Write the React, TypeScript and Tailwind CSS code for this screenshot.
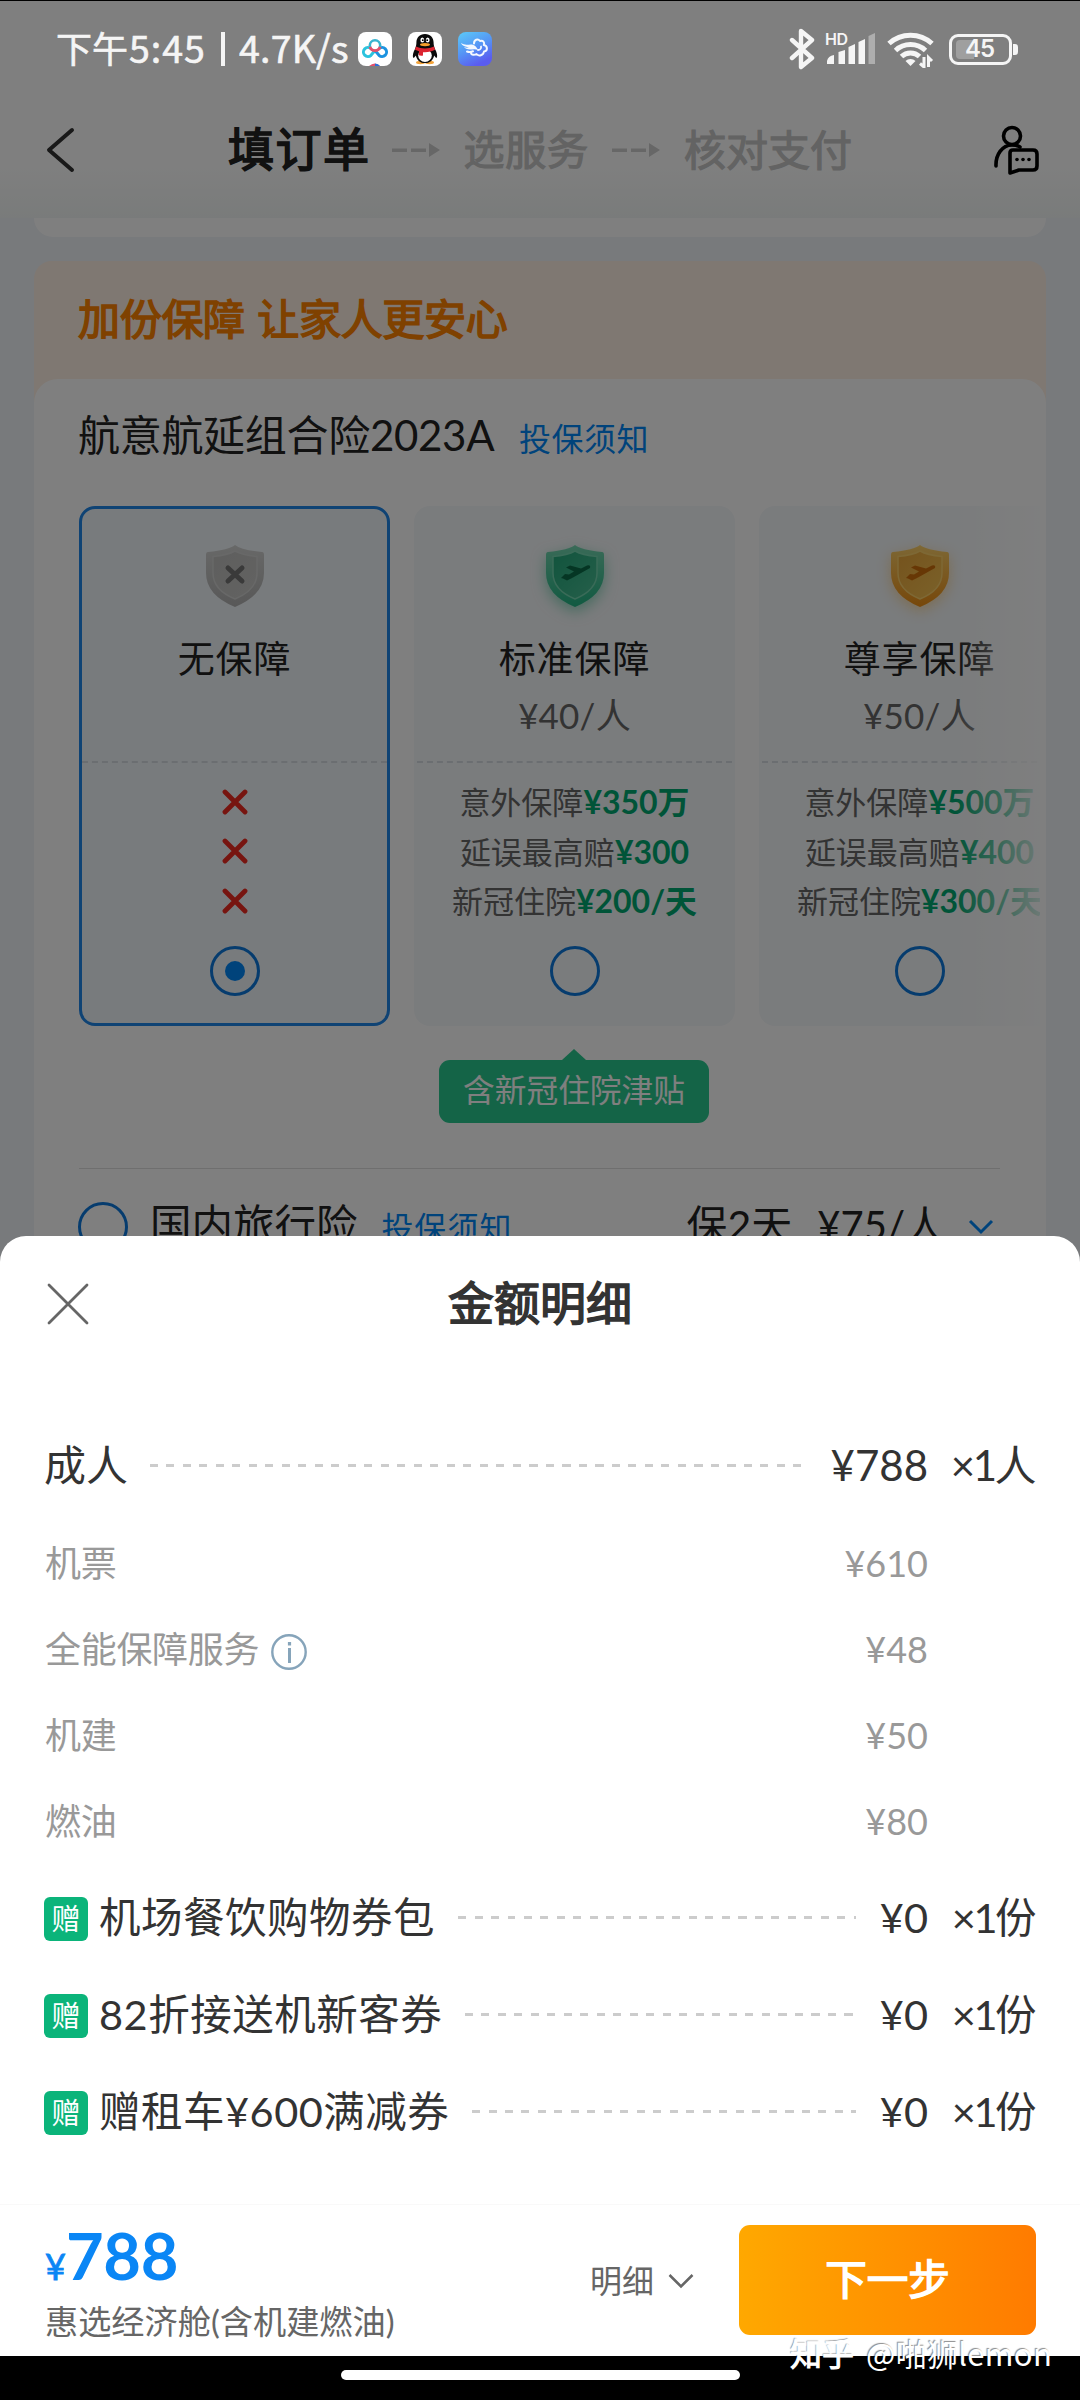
import React from "react";

const FONT = "font-[Lato,'Noto_Sans_CJK_SC',sans-serif]";

function BaiduDiskIcon() {
  return (
    <svg width="34" height="34" viewBox="0 0 34 34" className="rounded-[8px] bg-white">
      <path d="M17 18.500l-4 4.800a4.500 4.500 0 1 1 0-6.600" fill="none" stroke="#2cc3dd" strokeWidth="3" strokeLinecap="round" />
      <path d="M17 18.500l4 4.800a4.500 4.500 0 1 0 0-6.600" fill="none" stroke="#1b93e0" strokeWidth="3" strokeLinecap="round" />
      <circle cx="17" cy="13.500" r="5.200" fill="#fff" stroke="#38b4d0" strokeWidth="2.600" />
      <path d="M12 14.800a5.200 5.200 0 0 0 10 0" fill="none" stroke="#e2506c" strokeWidth="2.800" />
      <path d="M11 34q6-5 11 0z" fill="#e2506c" />
      <path d="M17 31.500q3.500 0 5 2.500h-5z" fill="#2b6fd8" />
    </svg>
  );
}

function QQIcon() {
  return (
    <svg width="34" height="34" viewBox="0 0 34 34" className="rounded-[8px] bg-white">
      <ellipse cx="12.500" cy="30.500" rx="4.500" ry="1.700" fill="#f3a33a" />
      <ellipse cx="21.500" cy="30.500" rx="4.500" ry="1.700" fill="#f3a33a" />
      <path d="M17 2c-5.500 0-8.600 4-8.600 8.500 0 1.500-.2 3.500-1.400 6.500-1.700 3.200-2.500 6-2 8.600.8.600 2-.8 2.800-2.200C9 28.500 12.500 31 17 31s8-2.500 9.200-7.600c.8 1.400 2 2.800 2.800 2.200.5-2.600-.3-5.400-2-8.600-1.200-3-1.400-5-1.400-6.500C25.600 6 22.500 2 17 2z" fill="#0b0b0b" />
      <ellipse cx="17" cy="23.500" rx="6.800" ry="6.500" fill="#fff" />
      <path d="M8 14.500c5 2.600 13 2.600 18 0l1 3.300c-2.500 1.500-6.500 2.400-10 2.400l-2 0v3.300c-1.500.3-3 .2-4.200-.2l.2-4.100L7 17.800z" fill="#dc2430" />
      <ellipse cx="14.300" cy="8" rx="1.900" ry="2.600" fill="#fff" />
      <ellipse cx="19.700" cy="8" rx="1.900" ry="2.600" fill="#fff" />
      <circle cx="14.800" cy="8.200" r=".9" fill="#000" />
      <circle cx="19.200" cy="8.200" r=".9" fill="#000" />
      <ellipse cx="17" cy="12.600" rx="5" ry="1.600" fill="#f6a02c" />
    </svg>
  );
}

function BirdIcon() {
  return (
    <svg width="34" height="34" viewBox="0 0 34 34" className="rounded-[8px]">
      <defs>
        <linearGradient id="bird" x1="0" y1="0" x2=".5" y2="1">
          <stop offset="0" stopColor="#5ccbf8" />
          <stop offset=".55" stopColor="#5595f5" />
          <stop offset="1" stopColor="#5a5cf0" />
        </linearGradient>
      </defs>
      <rect width="34" height="34" fill="url(#bird)" />
      <path d="M3 11c4 3 8 1 11 1.500 3 .5 5 3 6 5.500-3-1.500-6-.5-8-.5-3 0-5-1-6-2.500 2 .8 4 .8 5 .3C7.500 15 4 13.500 3 11z" fill="#f4f8ff" />
      <path
        d="M9 19.500c2 .8 4 .6 6-.2M16 11.500c0-4 4-5 6-2.500 3-1 5 1.500 3.800 4 4 .8 4.200 6 .2 6.500-.5 4-5.500 5-7.500 2.500-3 1.800-6 .5-5.500-2"
        fill="none" stroke="#f4f8ff" strokeWidth="2" strokeLinecap="round" strokeLinejoin="round"
      />
      <path d="M20 18c2 0 3.500-1.500 3-3.500" fill="none" stroke="#f4f8ff" strokeWidth="1.800" strokeLinecap="round" />
    </svg>
  );
}

function StatusBar() {
  return (
    <div className="absolute left-0 top-0 z-30 flex h-[97px] w-full items-center border-t border-black pl-[56px] pr-[62px] text-[#f5f5f5]">
      <div className="flex h-[54px] items-center pb-[4px] font-['Noto_Sans_CJK_SC',sans-serif] text-[37.500px] leading-[50px] [-webkit-text-stroke:.6px_#f5f5f5]">
        <span className="w-[73px] text-[36px]">下午</span>
        <span className="w-[87px] whitespace-nowrap tracking-[1px]">5:45</span>
        <span className="ml-[5px] mr-[14px] mt-[4px] h-[34px] w-[4px] bg-[#f5f5f5]" />
        <span className="w-[119px] whitespace-nowrap tracking-[.2px]">4.7K/s</span>
      </div>
      <div className="flex items-center gap-[16px]">
        <BaiduDiskIcon />
        <QQIcon />
        <BirdIcon />
      </div>
      <div className="ml-auto flex items-center">
        <svg width="26" height="42" viewBox="0 0 26 42" fill="none" stroke="#f5f5f5" strokeWidth="4.400" strokeLinejoin="round" strokeLinecap="round">
          <path d="M3 12l20 18-11 9V3l11 9L3 30" />
        </svg>
        <svg width="52" height="52" viewBox="0 -8 52 52" className="ml-[10px]" fill="#f5f5f5">
          <text x="0" y="14" fontSize="16" fontWeight="600" fontFamily="Inter" textLength="23">HD</text>
          <path d="M2 33v-3q1-5 7-6v9zM13.500 33V21l6.500-2v14zM23.500 33V16l6.500-3v20zM33.500 33V11l6.500-3v25z" />
          <path d="M43.500 33V5l6.500-3v31z" opacity=".4" />
        </svg>
        <svg width="48" height="38" viewBox="0 0 48 38" className="ml-[10px]" fill="none" stroke="#f5f5f5" strokeWidth="5">
          <path d="M2 13.500a32 32 0 0 1 43 0M8.500 20.500a22 22 0 0 1 30 0M14.500 26.500a13 13 0 0 1 18 0" />
          <path d="M18.500 31a7 7 0 0 1 10 0l-5 5z" fill="#f5f5f5" stroke="none" />
          <path d="M37 27v10l-4-3.500M41.500 37V27.500l3.500 3.500" strokeWidth="3" />
        </svg>
        <div className="ml-[14px] flex h-[31px] w-[63px] items-center rounded-[9px] border-[3px] border-[#f5f5f5] pl-[4px]">
          <div className="h-[19px] w-[18px] rounded-l-[4px] bg-white/25" />
          <span className="-ml-[9px] font-['Inter'] text-[24px] leading-[26px] font-semibold tracking-[-1px]">45</span>
        </div>
        <div className="ml-[1px] h-[11px] w-[5px] rounded-r-[3px] bg-[#f5f5f5]" />
      </div>
    </div>
  );
}

function StepArrow() {
  return (
    <svg width="48" height="14" viewBox="0 0 48 14" fill="#cfcfcf">
      <rect x="0" y="5.500" width="15" height="3.500" />
      <rect x="19" y="5.500" width="15" height="3.500" />
      <path d="M37 0l11 7-11 7z" />
    </svg>
  );
}

function Header() {
  return (
    <div className="h-[218px] bg-linear-to-b from-white from-75% to-[#f3f7f6] pt-[97px]">
      <div className="flex h-[106px] items-center pl-[46px] pr-[41px]">
        <svg width="30" height="46" viewBox="0 0 30 46" fill="none" stroke="#333" strokeWidth="4" strokeLinecap="round" strokeLinejoin="round">
          <path d="M26 3L3 23l23 20" />
        </svg>
        <span className="ml-[152px] pb-[2px] text-[46px] leading-[60px] tracking-[1.500px] text-[#222] [-webkit-text-stroke:1.700px_#222]">填订单</span>
        <div className="ml-[21px]"><StepArrow /></div>
        <span className="ml-[24px] pb-[1px] text-[41px] leading-[60px] tracking-[.8px] text-[#c6c6c6] [-webkit-text-stroke:1.200px_#c6c6c6]">选服务</span>
        <div className="ml-[23px]"><StepArrow /></div>
        <span className="ml-[24px] pb-[1px] text-[42px] leading-[60px] text-[#c6c6c6] [-webkit-text-stroke:1.200px_#c6c6c6]">核对支付</span>
        <svg width="46" height="50" viewBox="0 0 46 50" className="ml-auto" fill="none" stroke="#000" strokeWidth="3.600" strokeLinecap="round" strokeLinejoin="round">
          <circle cx="19" cy="11" r="8.500" />
          <path d="M3 41c-.5-11 6-21 16-21 3 0 6 .7 8 2" />
          <path d="M17 48V28q0-3 3-3h20q4 0 4 4v12q0 4-4 4H26z" />
          <g fill="#000" stroke="none">
            <circle cx="24" cy="34.500" r="1.800" />
            <circle cx="30" cy="34.500" r="1.800" />
            <circle cx="36" cy="34.500" r="1.800" />
          </g>
        </svg>
      </div>
    </div>
  );
}

type ShieldKind = "none" | "green" | "gold";
const shieldColors = {
  none: { light: "#d0d1d0", dark: "#b0b0b0", inner: "#bdbdbc", inner2: "#c6c6c4", mark: "#747474", glow: "" },
  green: { light: "#74d6b0", dark: "#22b483", inner: "#22a87a", inner2: "#4cc096", mark: "#0b6c48", glow: "drop-shadow-[0_5px_7px_rgba(40,180,130,.5)]" },
  gold: { light: "#fbd06a", dark: "#ee8f14", inner: "#eaa63a", inner2: "#f6c454", mark: "#cf6f0a", glow: "drop-shadow-[0_4px_7px_rgba(250,180,60,.45)]" },
};

function Shield({ kind }: { kind: ShieldKind }) {
  const c = shieldColors[kind];
  return (
    <svg width="60" height="64" viewBox="0 0 60 64" className={c.glow}>
      <defs>
        <linearGradient id={"s" + kind} x1="0" y1="0" x2="0" y2="1">
          <stop offset="0" stopColor={c.light} />
          <stop offset="1" stopColor={c.dark} />
        </linearGradient>
        <linearGradient id={"i" + kind} x1="0" y1="0" x2="1" y2="1">
          <stop offset="0" stopColor={c.inner} />
          <stop offset="1" stopColor={c.inner2} />
        </linearGradient>
      </defs>
      <path d="M30 1Q36 6 57 8q2 0 2 3v18q0 22-29 34Q1 51 1 29V11q0-3 2-3Q24 6 30 1z" fill={"url(#s" + kind + ")"} />
      <path d="M30 7q7 4 22 5.500V29q0 17-22 26Q8 46 8 29V12.500Q23 11 30 7z" fill={"url(#i" + kind + ")"} stroke={c.light} strokeWidth="1.500" />
      {kind === "none" ? (
        <path d="M23 24l14 13M37 24L23 37" stroke={c.mark} strokeWidth="5" strokeLinecap="round" />
      ) : (
        <path d="M16 34l4-4 4 .5 5-3-8-4 4-2 11 3 6-3q4-1 3 2.500l-17 9.500-6 3-4-2z" fill={c.mark} />
      )}
    </svg>
  );
}

function Radio({ on = false }: { on?: boolean }) {
  return (
    <div className="flex size-[50px] shrink-0 items-center justify-center rounded-full border-[3.500px] border-[#0c78dc]">
      {on && <div className="size-[20px] rounded-full bg-[#0086f6]" />}
    </div>
  );
}

type Plan = { kind: ShieldKind; title: string; price?: string; features?: [string, string][] };
const plans: Plan[] = [
  { kind: "none", title: "无保障" },
  { kind: "green", title: "标准保障", price: "¥40/人", features: [["意外保障", "¥350万"], ["延误最高赔", "¥300"], ["新冠住院", "¥200/天"]] },
  { kind: "gold", title: "尊享保障", price: "¥50/人", features: [["意外保障", "¥500万"], ["延误最高赔", "¥400"], ["新冠住院", "¥300/天"]] },
];

function PlanCard({ plan }: { plan: Plan }) {
  const selected = !plan.features;
  return (
    <div
      className={
        selected
          ? "flex h-[520px] w-[311px] shrink-0 flex-col items-center rounded-[16px] border-[3px] border-[#1f86e8] bg-[#f0f6fa]"
          : "flex h-[520px] w-[321px] shrink-0 flex-col items-center rounded-[16px] border-[3px] border-transparent bg-[#f5f8fa] bg-clip-border"
      }
    >
      <div className="mt-[35px] h-[64px]"><Shield kind={plan.kind} /></div>
      <div className="mt-[27px] h-[47px] text-[37px] leading-[47px] tracking-[.9px] text-[#222]">{plan.title}</div>
      <div className="mt-[11px] h-[44px] text-[35px] leading-[44px] tracking-[.2px] text-[#666]">{plan.price}</div>
      <div className="mt-[24px] w-full border-t-2 border-dashed border-[#d6dde3]" />
      <div className="mt-[14px] flex flex-col items-center">
        {plan.features
          ? plan.features.map(([a, b]) => (
              <div key={a} className="h-[49.500px] text-[31px] leading-[49.500px] whitespace-nowrap text-[#666]">
                {a}
                <span className="font-[Lato,'Noto_Sans_CJK_SC',sans-serif] text-[32px] font-bold text-[#00a870]">{b}</span>
              </div>
            ))
          : [0, 1, 2].map((i) => (
              <div key={i} className="flex h-[49.500px] items-center">
                <svg width="26" height="26" viewBox="0 0 26 26" stroke="#ee2a20" strokeWidth="4.800" strokeLinecap="round">
                  <path d="M3 3l20 20M23 3L3 23" />
                </svg>
              </div>
            ))}
      </div>
      <div className="mt-[20px]"><Radio on={selected} /></div>
    </div>
  );
}

function Insurance() {
  return (
    <div className="mx-[34px] mt-[24px] h-[1100px] rounded-t-[18px] bg-[#fff0e4]">
      <div className="h-[118px] pl-[44px] pt-[28px] text-[42px] leading-[60px] tracking-[-.3px] [word-spacing:2px] text-[#ff8300] [-webkit-text-stroke:1.600px_#ff8300]">加份保障 让家人更安心</div>
      <div className="h-[982px] rounded-t-[24px] bg-white pl-[45px] pt-[26px]">
        <div className="flex h-[60px] items-baseline leading-[60px]">
          <span className="-ml-[1px] w-[441px] whitespace-nowrap text-[42px] tracking-[-.3px] text-[#222]">航意航延组合险2023A</span>
          <span className="text-[32px] tracking-[.5px] text-[#0086f6]">投保须知</span>
        </div>
        <div className="relative mt-[41px] w-[961px] overflow-hidden">
          <div className="flex gap-[24px]">
            {plans.map((p) => <PlanCard key={p.title} plan={p} />)}
          </div>
          <div className="absolute inset-y-0 right-0 w-[85px] bg-linear-to-r from-white/0 to-white/85" />
        </div>
        <div className="ml-[360px] mt-[23px] flex w-[270px] flex-col items-center">
          <svg width="24" height="11" viewBox="0 0 24 11"><path d="M12 0l12 11H0z" fill="#28c88e" /></svg>
          <div className="h-[63px] w-[270px] rounded-[11px] bg-[#28c88e] text-center text-[31.700px] leading-[60px] text-white">含新冠住院津贴</div>
        </div>
        <div className="mt-[45px] h-px w-[921px] bg-[#dedede]" />
        <div className="mt-[34px] flex h-[48px] items-center">
          <div className="-ml-[1px]"><Radio /></div>
          <div className="ml-[22px] flex flex-1 items-baseline pb-[2px] leading-[48px] text-[#222]">
            <span className="text-[41.500px]">国内旅行险</span>
            <span className="ml-[24px] text-[32px] tracking-[.7px] text-[#0086f6]">投保须知</span>
            <span className="ml-auto text-[41px]">保2天</span>
            <span className="ml-[25px] mr-[23px] text-[40px]">¥75/人</span>
          </div>
          <svg width="26" height="16" viewBox="0 0 26 16" className="mr-[52px]" fill="none" stroke="#0086f6" strokeWidth="3"><path d="M2 2l11 11L24 2" /></svg>
        </div>
      </div>
    </div>
  );
}

function Dashes() {
  return (
    <div className="h-[3px] flex-1 bg-[repeating-linear-gradient(90deg,#ccc_0px,#ccc_8px,transparent_8px,transparent_16.500px)]" />
  );
}

function Amount({ price, qty }: { price: string; qty: string }) {
  return (
    <>
      <span className="ml-[24px]">{price}</span>
      <span className="w-[106px] whitespace-nowrap text-right tracking-[-2.500px]">{qty}</span>
    </>
  );
}

const fees = [
  { name: "机票", price: "¥610" },
  { name: "全能保障服务", price: "¥48", info: true },
  { name: "机建", price: "¥50" },
  { name: "燃油", price: "¥80" },
];
const gifts = ["机场餐饮购物券包", "82折接送机新客券", "赠租车¥600满减券"];

function Sheet() {
  return (
    <div className="absolute inset-x-0 bottom-[44px] z-20 flex h-[1120px] flex-col rounded-t-[26px] bg-white text-[#333]">
      <div className="grid h-[136px] grid-cols-[200px_1fr_200px] items-center">
        <svg width="42" height="42" viewBox="0 0 42 42" className="ml-[47px]" stroke="#666" strokeWidth="2.800" strokeLinecap="round"><path d="M2 2l38 38M40 2L2 40" /></svg>
        <h1 className="pb-[3px] text-center text-[46px] leading-[60px] [-webkit-text-stroke:1.600px_#333]">金额明细</h1>
      </div>
      <div className="mt-[63px] flex h-[60px] items-center pl-[44px] pr-[46px] text-[42px] leading-[60px]">
        <span className="mr-[22px]">成人</span>
        <Dashes />
        <Amount price="¥788" qty="×1人" />
      </div>
      <div className="mt-[25px]">
        {fees.map((f) => (
          <div key={f.name} className="flex h-[86px] items-center pl-[45px] pr-[152px] text-[36px] text-[#999]">
            <span className="tracking-[-.3px]">{f.name}</span>
            {f.info && (
              <svg width="36" height="36" viewBox="0 0 36 36" className="ml-[12px] mt-[5px]" fill="none" stroke="#86a4ba" strokeWidth="2.400">
                <circle cx="18" cy="18" r="16.700" />
                <path d="M18.500 14v15" strokeWidth="3" />
                <path d="M18.500 8v3.500" strokeWidth="3.200" />
              </svg>
            )}
            <span className="ml-auto">{f.price}</span>
          </div>
        ))}
      </div>
      <div className="mt-[5px]">
        {gifts.map((g) => (
          <div key={g} className="flex h-[97px] items-center pl-[44px] pr-[46px] text-[41.500px] leading-[60px]">
            <span className="mt-[2px] h-[44px] w-[44px] rounded-[6px] bg-[#0bb47a] text-center text-[29px] leading-[43px] text-white">赠</span>
            <span className="ml-[11px] mr-[23px] pb-[2px] tracking-[.5px]">{g}</span>
            <Dashes />
            <div className="flex pb-[2px]"><Amount price="¥0" qty="×1份" /></div>
          </div>
        ))}
      </div>
      <div className="mt-auto flex h-[152px] border-t border-[#f9f9f9] pl-[45px] pr-[44px]">
        <div className="flex flex-col">
          <div className="mt-[16px] flex h-[68px] items-baseline leading-[68px] text-[#0a86f5]">
            <span className="text-[36px] [-webkit-text-stroke:.8px_#0a86f5]">¥</span>
            <span className="text-[65px] font-bold tracking-[-.3px]">788</span>
          </div>
          <div className="mt-[9px] text-[33.200px] leading-[46px] text-[#666]">惠选经济舱(含机建燃油)</div>
        </div>
        <div className="ml-auto mr-[45px] flex h-[152px] items-center gap-[14px] text-[32px] text-[#666]">
          <span>明细</span>
          <svg width="26" height="16" viewBox="0 0 26 16" fill="none" stroke="#666" strokeWidth="2.500"><path d="M1.500 2L13 13.500 24.500 2" /></svg>
        </div>
        <button className="mt-[20px] h-[110px] w-[297px] rounded-[11px] bg-linear-to-r from-[#ffa800] to-[#ff7b00] pb-[1px] text-[41.500px] text-white [-webkit-text-stroke:1.600px_#fff]">下一步</button>
      </div>
    </div>
  );
}

export default function App() {
  return (
    <div className={"relative h-[2400px] w-[1080px] overflow-hidden bg-[#f1f4f8] " + FONT}>
      <Header />
      <div className="mx-[34px] h-[19px] rounded-b-[20px] bg-white" />
      <Insurance />
      <div className="absolute inset-0 z-10 bg-black/50" />
      <StatusBar />
      <Sheet />
      <div className="absolute inset-x-0 bottom-0 z-20 h-[44px] bg-black pt-[14px]">
        <div className="mx-auto h-[10px] w-[399px] rounded-full bg-white" />
      </div>
      <div className="absolute bottom-[21px] left-[790px] z-30 flex items-baseline text-[31px] leading-[50px] whitespace-nowrap text-white [text-shadow:-1px_-1px_1px_rgba(0,0,0,.45)]">
        <span className="text-[32px] [-webkit-text-stroke:1px_#fff]">知乎</span>
        <span className="ml-[12px] font-['Noto_Sans_CJK_SC',sans-serif] tracking-[.3px]">@啪狮lemon</span>
      </div>
    </div>
  );
}
